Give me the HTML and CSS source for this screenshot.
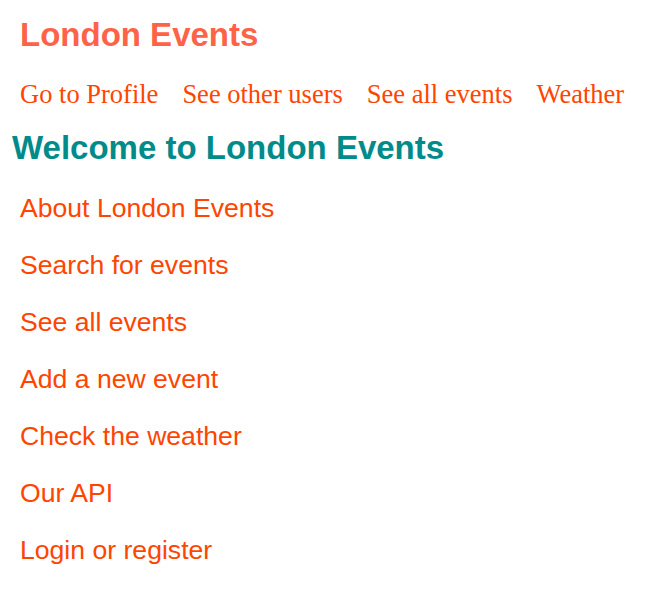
FILE: index.html
```html
<!DOCTYPE html>
<html>
<head>
<meta charset="utf-8">
<link rel="stylesheet" href="styles.css">
</head>
<body>
<header class="header">
  <h1 class="title">London Events</h1>
  <nav class="nav">
    <a class="nav-link" href="#">Go to Profile</a>
    <a class="nav-link" href="#">See other users</a>
    <a class="nav-link" href="#">See all events</a>
    <a class="nav-link" href="#">Weather</a>
  </nav>
</header>
<main class="main">
  <h2 class="welcome">Welcome to London Events</h2>
  <ul class="links">
    <li><a class="link" href="#">About London Events</a></li>
    <li><a class="link" href="#">Search for events</a></li>
    <li><a class="link" href="#">See all events</a></li>
    <li><a class="link" href="#">Add a new event</a></li>
    <li><a class="link" href="#">Check the weather</a></li>
    <li><a class="link" href="#">Our API</a></li>
    <li><a class="link" href="#">Login or register</a></li>
  </ul>
</main>
</body>
</html>
```
FILE: styles.css
```css
body {
  margin: 0;
  padding: 0 12px;
  background: #fff;
  font-family: "Liberation Sans", Arial, sans-serif;
}
.header {
  padding: 0 8px;
}
.title {
  margin: 14px 0 0;
  font-size: 33px;
  line-height: 42px;
  font-weight: bold;
  color: #ff6347;
}
.nav {
  display: flex;
  gap: 24px;
  margin-top: 22px;
}
.nav-link {
  font-family: "Liberation Serif", "Times New Roman", serif;
  font-size: 26.5px;
  line-height: 32px;
  color: #ff4500;
  text-decoration: none;
}
.welcome {
  margin: 18px 0 0;
  font-size: 33px;
  line-height: 40px;
  font-weight: bold;
  color: #008b8b;
}
.links {
  list-style: none;
  margin: 25px 0 0;
  padding: 0 8px;
  display: flex;
  flex-direction: column;
  gap: 27px;
}
.link {
  display: block;
  font-size: 26.6px;
  line-height: 30px;
  color: #ff4500;
  text-decoration: none;
}
```
